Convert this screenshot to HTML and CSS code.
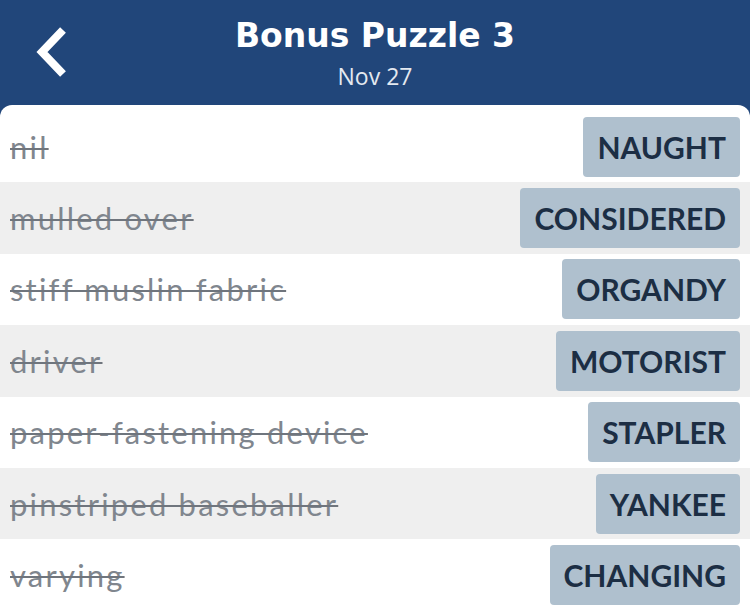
FILE: index.html
```html
<!DOCTYPE html>
<html lang="en">
<head>
    <meta charset="UTF-8">
    <meta name="viewport" content="width=device-width, initial-scale=1.0">
    <title>Bonus Puzzle 3</title>
    <link rel="stylesheet" href="styles.css">
</head>
<body>
    <header class="top-bar">
        <a class="back" href="#" aria-label="Back">
            <svg width="34" height="52" viewBox="0 0 34 52">
                <path d="M29 4 L8 26 L29 48" fill="none" stroke="#fff" stroke-width="8"/>
            </svg>
        </a>
        <div class="heading">
            <h1>Bonus Puzzle 3</h1>
            <p>Nov 27</p>
        </div>
    </header>

    <main class="sheet">
        <div class="clue-row">
            <span class="clue">nil</span>
            <span class="answer">NAUGHT</span>
        </div>
        <div class="clue-row">
            <span class="clue">mulled over</span>
            <span class="answer">CONSIDERED</span>
        </div>
        <div class="clue-row">
            <span class="clue">stiff muslin fabric</span>
            <span class="answer">ORGANDY</span>
        </div>
        <div class="clue-row">
            <span class="clue">driver</span>
            <span class="answer">MOTORIST</span>
        </div>
        <div class="clue-row">
            <span class="clue">paper-fastening device</span>
            <span class="answer">STAPLER</span>
        </div>
        <div class="clue-row">
            <span class="clue">pinstriped baseballer</span>
            <span class="answer">YANKEE</span>
        </div>
        <div class="clue-row">
            <span class="clue">varying</span>
            <span class="answer">CHANGING</span>
        </div>
    </main>
</body>
</html>
```

FILE: styles.css
```css
body {
    margin: 0;
    background-color: #21467a;
    font-family: Lato, "Open Sans", sans-serif;
    overflow: hidden;
}
.top-bar {
    height: 105px;
    display: grid;
    grid-template-columns: 1fr auto 1fr;
    align-items: center;
}
.back {
    display: flex;
    align-items: center;
    padding-left: 34px;
    padding-bottom: 2px;
}
.heading {
    text-align: center;
    color: #ffffff;
}
.heading h1 {
    margin: 0;
    font-family: "DejaVu Sans", Lato, sans-serif;
    font-size: 33px;
    font-weight: 700;
    line-height: 44px;
}
.heading p {
    margin: 2px 0 0;
    font-family: "Open Sans", sans-serif;
    font-size: 23px;
    line-height: 32px;
    color: #e4e9f0;
}
.sheet {
    background-color: #ffffff;
    border-radius: 12px 12px 0 0;
    padding-top: 6px;
}
.clue-row {
    height: 71.4px;
    display: flex;
    align-items: center;
    justify-content: space-between;
    padding: 0 10px;
    box-sizing: border-box;
}
.clue-row:nth-child(even) {
    background-color: #efefef;
}
.clue {
    font-size: 31px;
    letter-spacing: 2.2px;
    color: #80868e;
    text-decoration: line-through;
    text-decoration-thickness: 1.5px;
    text-decoration-color: #6f757d;
}
.answer {
    height: 60px;
    display: flex;
    align-items: center;
    padding: 0 14px;
    background-color: #afc0ce;
    border-radius: 4px;
    color: #1c2e44;
    font-size: 30px;
    font-weight: 700;
}
```
